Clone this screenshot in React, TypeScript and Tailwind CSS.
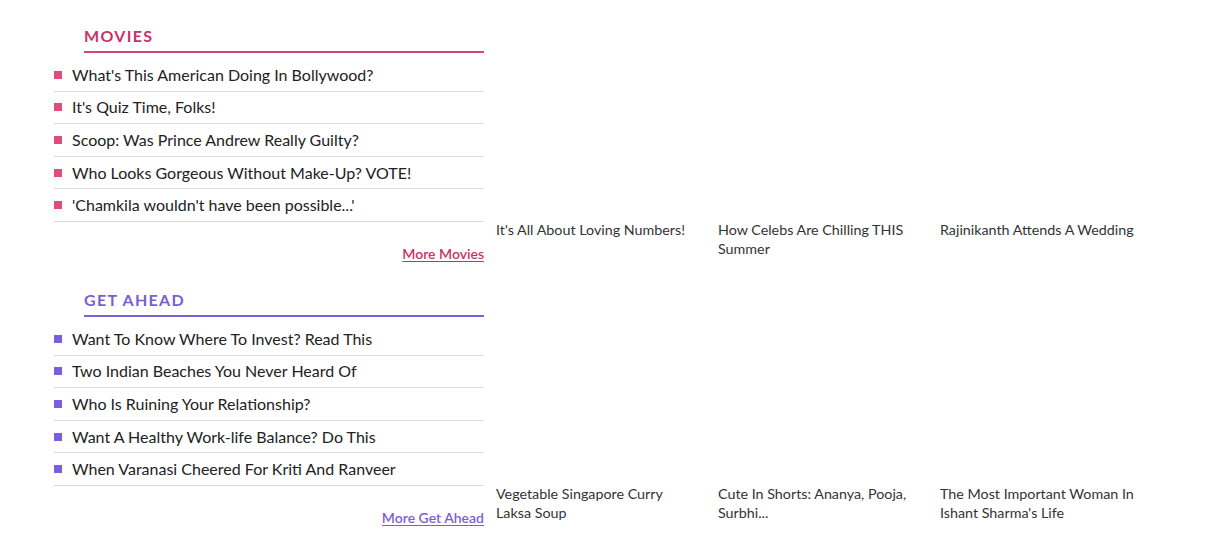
import React from 'react';

interface Section {
	title: string;
	more: string;
	accent: { text: string; border: string; bullet: string };
	links: string[];
	cards: string[];
}

const sections: Section[] = [
	{
		title: 'Movies',
		more: 'More Movies',
		accent: { text: 'text-[#c8336a]', border: 'border-[#d2477a]', bullet: 'bg-[#e04a7d]' },
		links: [
			"What's This American Doing In Bollywood?",
			"It's Quiz Time, Folks!",
			'Scoop: Was Prince Andrew Really Guilty?',
			'Who Looks Gorgeous Without Make-Up? VOTE!',
			"'Chamkila wouldn't have been possible...'",
		],
		cards: ["It's All About Loving Numbers!", 'How Celebs Are Chilling THIS Summer', 'Rajinikanth Attends A Wedding'],
	},
	{
		title: 'Get Ahead',
		more: 'More Get Ahead',
		accent: { text: 'text-[#7a5fd3]', border: 'border-[#7b60d6]', bullet: 'bg-[#7b5ee0]' },
		links: [
			'Want To Know Where To Invest? Read This',
			'Two Indian Beaches You Never Heard Of',
			'Who Is Ruining Your Relationship?',
			'Want A Healthy Work-life Balance? Do This',
			'When Varanasi Cheered For Kriti And Ranveer',
		],
		cards: ['Vegetable Singapore Curry Laksa Soup', 'Cute In Shorts: Ananya, Pooja, Surbhi...', "The Most Important Woman In Ishant Sharma's Life"],
	},
];

function NewsSection({ section }: { section: Section }) {
	return (
		<section className="flex gap-3 pt-[26px]">
			<div className="w-[430px] shrink-0">
				<h2 className={`ml-[30px] border-b-2 pb-[5px] leading-5 ${section.accent.border}`}>
					<span className={`text-[16px] font-bold uppercase tracking-[1.3px] ${section.accent.text}`}>{section.title}</span>
				</h2>
				<ul className="mt-[6px]">
					{section.links.map((link) => (
						<li key={link} className="flex h-[32.6px] items-center gap-[10px] border-b border-[#dcdcdc] text-[16px] text-[#222]">
							<span className={`h-2 w-2 shrink-0 ${section.accent.bullet}`}></span>
							<a href="#">{link}</a>
						</li>
					))}
				</ul>
				<div className="mt-[21px] text-right leading-5">
					<a href="#" className={`text-[14px] font-semibold underline underline-offset-2 ${section.accent.text}`}>
						{section.more}
					</a>
				</div>
			</div>
			<div className="grid grid-cols-[222px_222px_222px]">
				{section.cards.map((card) => (
					<a key={card} href="#" className="block">
						<div className="h-[194px]"></div>
						<p className="w-[203px] text-[14.3px] leading-[19px] text-[#333]">{card}</p>
					</a>
				))}
			</div>
		</section>
	);
}

export default function App() {
	return (
		<div className="min-h-[539px] bg-white pl-[54px] font-['Lato',sans-serif]">
			{sections.map((section) => (
				<NewsSection key={section.title} section={section} />
			))}
		</div>
	);
}
